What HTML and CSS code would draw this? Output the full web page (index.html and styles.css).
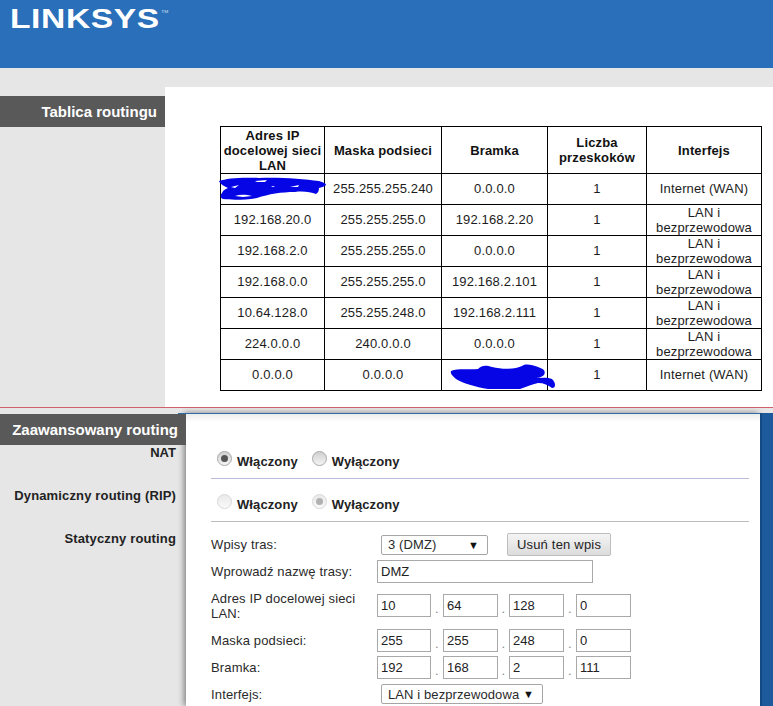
FILE: index.html
```html
<!DOCTYPE html>
<html lang="pl">
<head>
<meta charset="utf-8">
<title>Linksys - Tablica routingu</title>
<link rel="stylesheet" href="styles.css">
</head>
<body>
<header class="top">
  <div class="logo">LINKSYS<span class="tm">TM</span></div>
</header>
<div class="band"></div>
<section class="routes">
  <aside class="routes-side"><h2 class="tag tag-a">Tablica routingu</h2></aside>
  <div class="routes-main">
    <div class="table-wrap">
      <table class="rt">
        <colgroup><col class="c1"><col class="c2"><col class="c3"><col class="c4"><col class="c5"></colgroup>
        <thead>
          <tr><th>Adres IP docelowej sieci LAN</th><th>Maska podsieci</th><th>Bramka</th><th>Liczba przeskoków</th><th>Interfejs</th></tr>
        </thead>
        <tbody>
          <tr><td></td><td>255.255.255.240</td><td>0.0.0.0</td><td>1</td><td>Internet (WAN)</td></tr>
          <tr><td>192.168.20.0</td><td>255.255.255.0</td><td>192.168.2.20</td><td>1</td><td class="two">LAN i bezprzewodowa</td></tr>
          <tr><td>192.168.2.0</td><td>255.255.255.0</td><td>0.0.0.0</td><td>1</td><td class="two">LAN i bezprzewodowa</td></tr>
          <tr><td>192.168.0.0</td><td>255.255.255.0</td><td>192.168.2.101</td><td>1</td><td class="two">LAN i bezprzewodowa</td></tr>
          <tr><td>10.64.128.0</td><td>255.255.248.0</td><td>192.168.2.111</td><td>1</td><td class="two">LAN i bezprzewodowa</td></tr>
          <tr><td>224.0.0.0</td><td>240.0.0.0</td><td>0.0.0.0</td><td>1</td><td class="two">LAN i bezprzewodowa</td></tr>
          <tr><td>0.0.0.0</td><td>0.0.0.0</td><td></td><td>1</td><td>Internet (WAN)</td></tr>
        </tbody>
      </table>
      <svg class="blob blob-a" width="108" height="23" viewBox="0 0 108 23" aria-hidden="true">
        <path fill="#0505e6" d="M0 4 C8 1 24 0 40 1 C60 0 84 2 100 4 C103 5 107 6 107 8 C105 10 102 10 100 11 C100 14 99 16 97 17 C92 15 84 14 76 15 C62 15 50 17 38 21 C26 23 12 23 4 22 C1 21 1 18 3 16 C4 13 7 12 9 11 C5 9 1 7 0 4 Z"/>
        <path fill="#fff" d="M36 4 L48 3 L46 5 L38 5 Z M16 19 C22 17 28 18 33 19 L24 20 Z M71 10 L80 8 L79 10 Z M12 10 L20 8 L16 11 Z M52 9 L56 9 L54 10 Z"/>
      </svg>
      <svg class="blob blob-b" width="106" height="27" viewBox="0 0 106 27" aria-hidden="true">
        <path fill="#0505e6" d="M1 8 C8 5 20 7 28 6 C32 2 36 2 42 4 C54 7 66 6 72 3 C76 0 82 2 88 4 C94 6 96 8 94 12 C90 15 88 15 84 15 C90 15 98 14 102 16 C106 20 106 25 102 25 C98 22 94 20 88 20 C80 22 76 24 70 26 L38 26 C26 24 12 20 6 16 C3 13 0 11 1 8 Z"/>
      </svg>
    </div>
  </div>
</section>
<div class="seam"></div>
<section class="advanced">
  <aside class="adv-side">
    <h2 class="tag tag-b">Zaawansowany routing</h2>
    <div class="side-labels">
      <div class="side-label side-nat">NAT</div>
      <div class="side-label side-rip">Dynamiczny routing (RIP)</div>
      <div class="side-label side-static">Statyczny routing</div>
    </div>
  </aside>
  <div class="adv-main">
    <div class="radio-row radio-nat">
      <label class="choice"><span class="radio on"></span>Włączony</label>
      <label class="choice"><span class="radio"></span>Wyłączony</label>
    </div>
    <div class="radio-row radio-rip">
      <label class="choice"><span class="radio faded"></span>Włączony</label>
      <label class="choice"><span class="radio on faded"></span>Wyłączony</label>
    </div>
    <div class="form">
      <div class="frow r-entry">
        <span class="lbl">Wpisy tras:</span>
        <div class="ctl ctl-in">
          <div class="sel sel-entry"><span>3 (DMZ)</span><span class="arrow">▼</span></div>
          <button class="btn" type="button">Usuń ten wpis</button>
        </div>
      </div>
      <div class="frow r-name">
        <span class="lbl">Wprowadź nazwę trasy:</span>
        <div class="ctl"><input class="inp inp-wide" type="text" value="DMZ"></div>
      </div>
      <div class="frow r-ip">
        <span class="lbl">Adres IP docelowej sieci LAN:</span>
        <div class="ctl ips"><input class="inp" value="10"><i>.</i><input class="inp" value="64"><i>.</i><input class="inp" value="128"><i>.</i><input class="inp" value="0"></div>
      </div>
      <div class="frow r-mask">
        <span class="lbl">Maska podsieci:</span>
        <div class="ctl ips"><input class="inp" value="255"><i>.</i><input class="inp" value="255"><i>.</i><input class="inp" value="248"><i>.</i><input class="inp" value="0"></div>
      </div>
      <div class="frow r-gw">
        <span class="lbl">Bramka:</span>
        <div class="ctl ips"><input class="inp" value="192"><i>.</i><input class="inp" value="168"><i>.</i><input class="inp" value="2"><i>.</i><input class="inp" value="111"></div>
      </div>
      <div class="frow r-if">
        <span class="lbl">Interfejs:</span>
        <div class="ctl ctl-in"><div class="sel sel-if"><span>LAN i bezprzewodowa</span><span class="arrow">▼</span></div></div>
      </div>
    </div>
  </div>
  <div class="adv-edge"></div>
</section>
</body>
</html>
```
FILE: styles.css
```css
* { box-sizing: border-box; }
html, body { margin: 0; padding: 0; }
body {
  height: 706px;
  overflow: hidden;
  background: #e6e6e6;
  font-family: "Liberation Sans", Arial, sans-serif;
  font-size: 13px;
  color: #222;
}
.top { height: 68px; background: #2a6fb9; padding: 6px 0 0 10px; }
.logo {
  position: relative;
  width: 125px;
  color: #fff;
  font-weight: 700;
  font-size: 28px;
  line-height: 25px;
  letter-spacing: 0.5px;
  white-space: nowrap;
  transform: scaleX(1.2);
  transform-origin: left top;
}
.tm { position: absolute; left: 126px; top: 3px; font-size: 4px; line-height: 5px; letter-spacing: 0; font-weight: 400; color: #d5e2f1; }
.band { height: 19px; background: #e6e6e6; }
.routes { display: flex; height: 320px; }
.routes-side { width: 165px; flex: none; padding-top: 9px; }
.tag { margin: 0; background: #595959; color: #fff; font-size: 15px; font-weight: 700; text-align: right; }
.tag-a { height: 31px; line-height: 31px; padding-right: 8px; }
.routes-main { flex: 1; background: #fff; padding: 39px 0 0 55px; }
.table-wrap { position: relative; width: 541px; }
.rt { border-collapse: collapse; table-layout: fixed; width: 541px; letter-spacing: 0.15px; color: #1c1c1c; }
.c1 { width: 104px; } .c2 { width: 117px; } .c3 { width: 106px; } .c4 { width: 99px; } .c5 { width: 115px; }
.rt th, .rt td { border: 1px solid #000; text-align: center; padding: 0 4px; line-height: 15px; font-weight: 400; }
.rt th { font-weight: 700; height: 47px; color: #111; padding: 0 1px; }
.rt td { height: 31px; padding-bottom: 2px; }
.rt td.two { padding-bottom: 0; }
.blob { position: absolute; }
.blob-a { left: -1px; top: 51px; }
.blob-b { left: 230px; top: 237px; }
.seam { height: 1px; background: #d0606a; box-shadow: 0 1px 0 #cfcfcf; }
.advanced { display: flex; height: 298px; background: #e6e6e6; position: relative; }
.adv-side { width: 186px; flex: none; padding-top: 6px; }
.tag-b { position: relative; z-index: 2; height: 31px; line-height: 31px; padding-right: 8px; }
.side-label { position: relative; z-index: 2; text-align: right; padding-right: 10px; font-weight: 700; font-size: 13px; letter-spacing: 0.15px; line-height: 15px; color: #222; }
.side-nat { letter-spacing: 0; }
.side-rip { margin-top: 28px; }
.side-static { margin-top: 28px; }
.adv-main {
  width: 574px;
  flex: none;
  background: linear-gradient(#ececec, #fff 8px);
  padding: 0 11px 0 25px;
  margin-top: 5px;
  position: relative;
  z-index: 1;
  border-top: 1px solid #2e6da4;
  box-shadow: -2px 0 6px #808080;
}
.adv-main::before {
  content: "";
  position: absolute;
  left: -8px;
  top: -1px;
  width: 8px;
  height: 1px;
  background: #2e6da4;
}
.adv-edge { flex: 1; position: relative; z-index: 1; margin-top: 5px; background: #1d5a9c; border-left: 2px solid #134a85; }
.radio-row { display: flex; gap: 14px; align-items: center; border-bottom: 1px solid #b9b9d9; padding-left: 6px; font-weight: 700; font-size: 13px; letter-spacing: 0.1px; color: #222; }
.radio-nat { height: 65px; padding-top: 30px; }
.radio-rip { height: 43px; padding-top: 9px; border-bottom-color: #bbb; }
.choice { display: flex; align-items: center; gap: 5px; }
.radio { width: 15px; height: 15px; border-radius: 50%; background: linear-gradient(#d0d0d0, #f4f4f4); border: 1px solid #a8a8a8; position: relative; top: -3px; display: block; }
.radio.on::after { content: ""; position: absolute; left: 3px; top: 3px; width: 7px; height: 7px; border-radius: 50%; background: #555; }
.radio.faded { opacity: .45; }
.form { padding-top: 11px; font-size: 13px; letter-spacing: .15px; color: #2a2a2a; }
.frow { display: grid; grid-template-columns: 166px 1fr; align-items: center; }
.r-entry { height: 23px; }
.r-name { height: 23px; margin-top: 4px; }
.r-ip { height: 31px; margin-top: 7px; }
.r-mask { height: 23px; margin-top: 8px; }
.r-gw { height: 23px; margin-top: 4px; }
.r-if { height: 20px; margin-top: 5px; }
.lbl { line-height: 15px; }
.ctl { display: flex; align-items: center; }
.ctl-in { padding-left: 4px; }
.sel { display: flex; align-items: center; justify-content: space-between; height: 20px; border: 1px solid #a6a6a6; border-radius: 2px; background: #fff; padding: 0 8px 0 6px; font-size: 13px; letter-spacing: .1px; }
.sel-entry { width: 107px; }
.sel-if { width: 162px; }
.arrow { font-size: 11px; color: #111; letter-spacing: 0; }
.btn { margin-left: 19px; width: 104px; height: 23px; border: 1px solid #bdbdbd; border-radius: 2px; background: linear-gradient(#f4f4f4, #dcdcdc); font: 13px "Liberation Sans", Arial, sans-serif; letter-spacing: .2px; color: #222; padding: 0; }
.inp { width: 55px; height: 23px; border: 1px solid #a9a9a9; background: #fff; padding: 0 3px; font: 13px "Liberation Sans", Arial, sans-serif; color: #222; margin: 0; }
.inp-wide { width: 216px; }
.ips .inp:first-child { width: 54px; }
.ips i { width: 12px; text-align: center; font-style: normal; color: #888; padding-top: 6px; }
.ips i:nth-child(4) { width: 11px; }
```
